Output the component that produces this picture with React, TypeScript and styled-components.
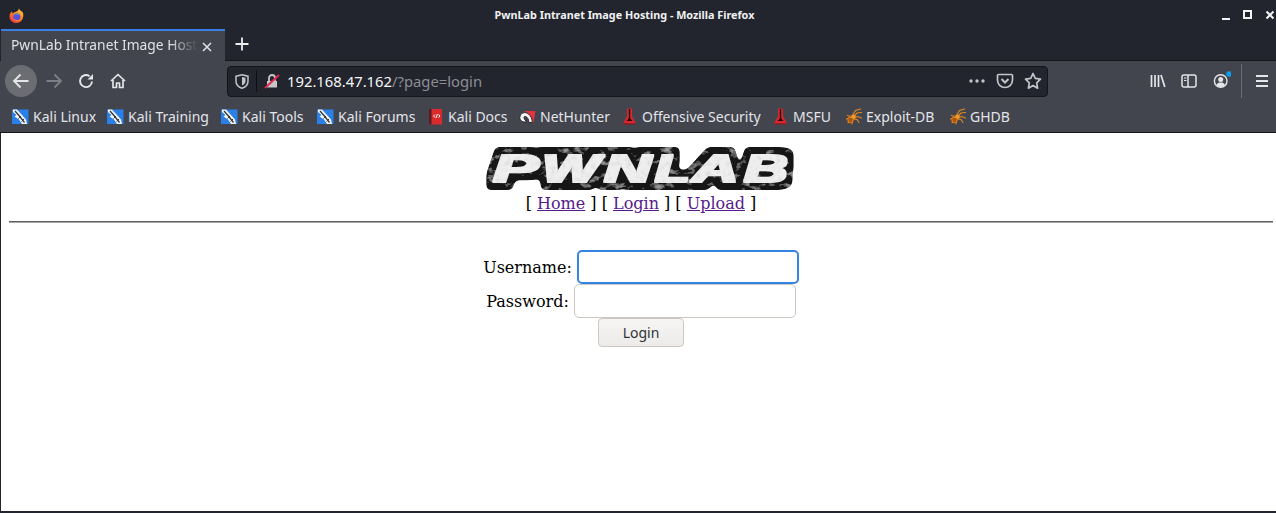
import styled, { createGlobalStyle } from "styled-components";

const GlobalStyle = createGlobalStyle`
  html, body {
    margin: 0;
    padding: 0;
    background: #fff;
  }
`;

const uiFont = `"Noto Sans", "Open Sans", sans-serif`;

const Window = styled.div`
  width: 1276px;
  height: 513px;
  overflow: hidden;
  display: flex;
  flex-direction: column;
  background: #23252e;
  font-family: ${uiFont};
`;

const TitleBar = styled.header`
  height: 28px;
  margin-top: 1px;
  display: flex;
  align-items: center;
  flex: none;
`;

const AppIcon = styled.div`
  width: 16px;
  height: 16px;
  margin-left: 9px;
  margin-top: -1px;
`;

const WindowTitle = styled.div`
  flex: 1;
  text-align: center;
  color: #f0f1f2;
  font-size: 10.8px;
  font-weight: 700;
  margin-top: -1px;
  padding-left: 3px;
`;

const WindowControls = styled.div`
  display: flex;
  align-items: center;
  gap: 12px;
  margin-right: 1px;
  margin-top: -1px;
`;

const TabStrip = styled.div`
  height: 32px;
  display: flex;
  flex: none;
  border-bottom: 1px solid #14151a;
  box-sizing: border-box;
  padding-left: 1px;
`;

const Tab = styled.div`
  width: 224px;
  height: 32px;
  box-sizing: border-box;
  border-top: 2px solid #3b7fe6;
  background: #42454e;
  display: flex;
  align-items: center;
  padding-left: 10px;
  color: #dfe1e5;
  font-size: 13.8px;
`;

const TabLabel = styled.span`
  width: 187px;
  overflow: hidden;
  white-space: nowrap;
  margin-top: -3px;
  -webkit-mask-image: linear-gradient(90deg, #000 85%, transparent 100%);
  mask-image: linear-gradient(90deg, #000 85%, transparent 100%);
`;

const TabClose = styled.div`
  width: 12px;
  height: 12px;
  margin-left: 3px;
  margin-top: -5px;
`;

const NewTab = styled.div`
  width: 16px;
  height: 16px;
  margin-left: 9px;
  margin-top: 6px;
`;

const NavBar = styled.nav`
  height: 40px;
  flex: none;
  background: #42454e;
  display: flex;
  align-items: center;
  padding-left: 5px;
`;

const NavButton = styled.div<{ $active?: boolean; $muted?: boolean; $width?: number }>`
  width: ${(p) => p.$width ?? 32}px;
  height: 32px;
  flex: none;
  display: flex;
  align-items: center;
  justify-content: center;
  border-radius: 50%;
  color: ${(p) => (p.$muted ? "#7d7f85" : "#e4e5e7")};
  background: ${(p) => (p.$active ? "#6b6d73" : "transparent")};
  margin-right: ${(p) => (p.$active ? "1px" : "0")};
`;

const UrlBar = styled.div`
  width: 821px;
  height: 31px;
  box-sizing: border-box;
  margin-left: 93px;
  margin-right: 94px;
  background: #23252e;
  border: 1px solid #14151a;
  border-radius: 4px;
  display: flex;
  align-items: center;
  flex: none;
`;

const ShieldSlot = styled.div`
  width: 28px;
  height: 100%;
  display: flex;
  align-items: center;
  justify-content: center;
  color: #c3c4c7;
`;

const UrlDivider = styled.div`
  width: 1px;
  height: 22px;
  background: #0f1014;
`;

const LockSlot = styled.div`
  width: 30px;
  display: flex;
  align-items: center;
  justify-content: center;
`;

const UrlText = styled.div`
  flex: 1;
  font-size: 14.8px;
  color: #8b8d93;
  white-space: nowrap;
  margin-top: -1px;
`;

const UrlHost = styled.span`
  color: #f5f6f7;
`;

const UrlActions = styled.div`
  display: flex;
  align-items: center;
  gap: 10px;
  color: #c3c4c7;
  padding-right: 5px;
`;

const ToolSeparator = styled.div`
  width: 1px;
  height: 34px;
  background: #6a6c72;
  margin-left: 5px;
  margin-right: 5px;
  flex: none;
`;

const BookmarkBar = styled.div`
  height: 32px;
  flex: none;
  box-sizing: border-box;
  background: #42454e;
  border-bottom: 1px solid #14151a;
  display: flex;
  align-items: center;
  padding-left: 12px;
`;

const Bookmark = styled.div<{ $width: number }>`
  width: ${(p) => p.$width}px;
  flex: none;
  display: flex;
  align-items: center;
  gap: 4px;
  color: #e2e4e8;
  font-size: 14px;
  white-space: nowrap;
`;

const Favicon = styled.svg`
  width: 17px;
  height: 17px;
  flex: none;
`;

const Page = styled.main`
  flex: 1;
  background: #fff;
  border-left: 1px solid #23252e;
  border-bottom: 2px solid #23252e;
  padding: 14px 3px 0 8px;
  font-family: "DejaVu Serif", serif;
  font-size: 16px;
  color: #000;
  text-align: center;
  min-height: 0;
`;

const Logo = styled.svg`
  display: block;
  width: 310px;
  height: 46px;
  margin: 0 auto;
`;

const PageNav = styled.div`
  line-height: 19px;
  margin-top: 1px;
`;

const PageLink = styled.a`
  color: #551a8b;
  text-decoration: underline;
`;

const Rule = styled.hr`
  margin: 8px 0 27px;
  height: 2px;
  box-sizing: border-box;
  border: 0;
  border-top: 1px solid #5e5e5e;
  border-bottom: 1px solid #a8a8a8;
`;

const LoginForm = styled.form`
  display: flex;
  flex-direction: column;
  align-items: center;
`;

const FieldRow = styled.label`
  height: 34px;
  display: flex;
  align-items: center;
  gap: 5px;
`;

const FieldInput = styled.input<{ $focused?: boolean }>`
  width: 222px;
  height: 34px;
  box-sizing: border-box;
  padding: 0 8px;
  outline: 0;
  background: #fff;
  border: ${(p) => (p.$focused ? "2px solid #3584e4" : "1px solid #cdc7c2")};
  border-radius: 5px;
`;

const SubmitButton = styled.button`
  width: 86px;
  height: 29px;
  box-sizing: border-box;
  border: 1px solid #cdc7c2;
  border-radius: 4px;
  background: linear-gradient(#f6f5f4, #edebe9);
  color: #2e3436;
  font-family: ${uiFont};
  font-size: 14px;
  padding: 0;
`;

const FirefoxIcon = () => (
  <svg width="16" height="16" viewBox="0 0 16 16">
    <defs>
      <linearGradient id="fx" x1="0.8" y1="0" x2="0.2" y2="1">
        <stop offset="0" stopColor="#ffd03a" />
        <stop offset="0.5" stopColor="#ff7a1f" />
        <stop offset="1" stopColor="#e8304a" />
      </linearGradient>
    </defs>
    <path d="M10 .5c.6 1.400 1.500 2 2.500 3 .6-.3 1 .2 1.500 1.500 1 3.500-.5 9.500-6 10C3.500 15.500.5 12 .5 8.500.5 6 1.500 4.500 3 3.500c0 1 .3 1.500.8 2C5 3.500 7.500 4 8.500 3c.8-.7 1.300-1.500 1.500-2.500z" fill="url(#fx)" />
    <circle cx="7.800" cy="9" r="3.600" fill="#5a50d8" />
    <path d="M5 6.500c1.500-1.500 4-1.500 5.500 0l-2 .8c-1-.3-2-.3-3.500-.8z" fill="#3f8df0" />
    <path d="M4 10c1 2.500 4 3.500 6.500 2.500 1-.5 2-1.500 2.500-3-1 2-3.500 3-5.500 2.500-1.500-.3-2.500-1-3.500-2z" fill="#ff9a2a" />
  </svg>
);

const KaliFavicon = () => (
  <Favicon viewBox="0 0 17 17">
    <path d="M0 1.500h16.500v14.500H0z" fill="#2a7fe8" />
    <path d="M1 1.500 5 1.500 14 11.500 15 16 10 16 7 11.500 2.500 8.500 4.500 7 1 4z" fill="#f4f5f7" />
    <path d="M3 3 7 7.500l5.500 7" fill="none" stroke="#33363d" strokeWidth="1.300" />
    <path d="M6.500 10.500l2.500-2.500M9.500 13.500l2.500-2.500" stroke="#33363d" strokeWidth="1" />
  </Favicon>
);

const DocsFavicon = () => (
  <Favicon viewBox="0 0 17 17">
    <path d="M2 1h13v15.500H3.500A1.500 1.500 0 0 1 2 15z" fill="#d92b2b" />
    <path d="M2 1h2.500v15.500h-1A1.500 1.500 0 0 1 2 15z" fill="#5b1b22" />
    <path d="M6.500 8 8 6.500M6.500 8 8 9.500M13 8 11.500 6.500M13 8 11.500 9.500M10.500 6 9 10" stroke="#fff" strokeWidth="1" fill="none" />
  </Favicon>
);

const NetHunterFavicon = () => (
  <Favicon viewBox="0 0 17 17">
    <path d="M5 3h11.500l-2 11.500H12L8 4.500z" fill="#e5333f" />
    <path d="M.8 9.500C1 5 6 3 9.500 6c2.500 2 3.800 5 3.800 8.500H9.800C9.800 11.500 8.500 9 6.500 8.500 5 8.200 4.500 9.500 5.500 11l2 3c-3.500.5-6.700-1-6.700-4.500z" fill="#f4f4f4" stroke="#26262a" strokeWidth="1" />
  </Favicon>
);

const FlaskFavicon = () => (
  <Favicon viewBox="0 0 17 17">
    <path d="M6 .5h5v7.500l4 7.500H2l4-7.500z" fill="#d9252b" />
    <path d="M7.800 1h1.400v9.500L11.500 13h-6l2.300-2.500z" fill="#1e0b0d" />
    <path d="M2.500 15.500h12v1h-12z" fill="#8e1418" />
  </Favicon>
);

const SpiderFavicon = () => (
  <Favicon viewBox="0 0 17 17">
    <g fill="none" stroke="#e58a1f" strokeWidth="1.100" strokeLinecap="round">
      <path d="M7 8 10.500 2.500l5-1.500M8 9l4-4 4.500-.5M8.500 10l4-1.500 4 1.500M9 11l3 .5 2 3M6.500 11 3 15M8 11.500l-1 4.500M5.500 9.500l-4 1.500M6 8.500 2.500 7.500" />
    </g>
    <ellipse cx="5.500" cy="11.800" rx="3.200" ry="3.400" fill="#d9751a" />
    <circle cx="8.500" cy="8.800" r="2.300" fill="#f09a2a" />
    <path d="M3.500 11h4M4 13h3" stroke="#6a3408" strokeWidth=".9" />
  </Favicon>
);

const bookmarks = [
  { label: "Kali Linux", icon: <KaliFavicon />, width: 95 },
  { label: "Kali Training", icon: <KaliFavicon />, width: 114 },
  { label: "Kali Tools", icon: <KaliFavicon />, width: 96 },
  { label: "Kali Forums", icon: <KaliFavicon />, width: 110 },
  { label: "Kali Docs", icon: <DocsFavicon />, width: 92 },
  { label: "NetHunter", icon: <NetHunterFavicon />, width: 102 },
  { label: "Offensive Security", icon: <FlaskFavicon />, width: 151 },
  { label: "MSFU", icon: <FlaskFavicon />, width: 73 },
  { label: "Exploit-DB", icon: <SpiderFavicon />, width: 104 },
  { label: "GHDB", icon: <SpiderFavicon />, width: 70 },
];

// x offset and horizontal stretch of each logo letter
const logoLetters = [
  { char: "P", x: 7, sx: 1.8 },
  { char: "W", x: 56, sx: 1.6 },
  { char: "N", x: 118, sx: 1.72 },
  { char: "L", x: 169, sx: 1.5 },
  { char: "A", x: 206, sx: 1.7 },
  { char: "B", x: 258, sx: 1.6 },
];

const LogoLayer = ({ fill, filter }: { fill: string; filter: string }) => (
  <g
    fontFamily="'Liberation Sans', sans-serif"
    fontWeight="700"
    fontStyle="italic"
    fontSize="38"
    fill={fill}
    filter={filter}
  >
    {logoLetters.map((l) => (
      <text key={l.char} transform={`translate(${l.x} 35) scale(${l.sx} 1)`}>
        {l.char}
      </text>
    ))}
  </g>
);

const PwnlabLogo = () => (
  <Logo viewBox="0 0 310 46">
    <defs>
      <filter id="rock" filterUnits="userSpaceOnUse" x="0" y="0" width="310" height="46">
        <feMorphology in="SourceAlpha" operator="dilate" radius="8 8" />
        <feGaussianBlur stdDeviation="2.500" />
        <feComponentTransfer result="blob">
          <feFuncA type="linear" slope="8" intercept="-3.500" />
        </feComponentTransfer>
        <feFlood floodColor="#141414" />
        <feComposite in2="blob" operator="in" result="dark" />
        <feTurbulence type="fractalNoise" baseFrequency="0.09 0.14" numOctaves="4" seed="7" />
        <feColorMatrix
          type="matrix"
          values="0 0 0 0 .5  0 0 0 0 .5  0 0 0 0 .5  2.400 0 0 0 -1.380"
        />
        <feComposite in2="blob" operator="in" result="veins" />
        <feMerge>
          <feMergeNode in="dark" />
          <feMergeNode in="veins" />
        </feMerge>
      </filter>
      <filter id="paper" filterUnits="userSpaceOnUse" x="0" y="0" width="310" height="46">
        <feMorphology in="SourceGraphic" operator="dilate" radius="1.500 1" result="letters" />
        <feTurbulence type="fractalNoise" baseFrequency="0.2" numOctaves="3" seed="3" />
        <feColorMatrix
          type="matrix"
          values="0 0 0 0 .6  0 0 0 0 .6  0 0 0 0 .6  1.400 0 0 0 -0.680"
        />
        <feComposite in2="letters" operator="in" result="grain" />
        <feMerge>
          <feMergeNode in="letters" />
          <feMergeNode in="grain" />
        </feMerge>
      </filter>
    </defs>
    <LogoLayer fill="#141414" filter="url(#rock)" />
    <LogoLayer fill="#eeeeee" filter="url(#paper)" />
  </Logo>
);

export default function App() {
  return (
    <>
      <GlobalStyle />
      <Window>
        <TitleBar>
          <AppIcon>
            <FirefoxIcon />
          </AppIcon>
          <WindowTitle>PwnLab Intranet Image Hosting - Mozilla Firefox</WindowTitle>
          <WindowControls>
            <svg width="10" height="10" viewBox="0 0 10 10">
              <path d="M1 8h8v2H1z" fill="#f4f4f4" />
            </svg>
            <svg width="10" height="10" viewBox="0 0 10 10">
              <path d="M1 1h7v7H1z" fill="none" stroke="#f4f4f4" strokeWidth="2" />
            </svg>
            <svg width="10" height="10" viewBox="0 0 10 10">
              <path d="M1.500 1.500l7 7M8.500 1.500l-7 7" stroke="#f4f4f4" strokeWidth="2" />
            </svg>
          </WindowControls>
        </TitleBar>

        <TabStrip>
          <Tab>
            <TabLabel>PwnLab Intranet Image Hosting</TabLabel>
            <TabClose>
              <svg width="12" height="12" viewBox="0 0 12 12">
                <path d="M2 2l8 8M10 2l-8 8" stroke="#dfe1e5" strokeWidth="1.600" />
              </svg>
            </TabClose>
          </Tab>
          <NewTab>
            <svg width="16" height="16" viewBox="0 0 16 16">
              <path d="M8 1.500v13M1.500 8h13" stroke="#eceded" strokeWidth="1.800" />
            </svg>
          </NewTab>
        </TabStrip>

        <NavBar>
          <NavButton $active>
            <svg width="18" height="18" viewBox="0 0 18 18" fill="none" stroke="currentColor" strokeWidth="1.800">
              <path d="M16.500 9H2M8.500 2.500 2 9l6.500 6.500" />
            </svg>
          </NavButton>
          <NavButton $muted>
            <svg width="18" height="18" viewBox="0 0 18 18" fill="none" stroke="currentColor" strokeWidth="1.800">
              <path d="M1.500 9H16M9.500 2.500 16 9l-6.500 6.500" />
            </svg>
          </NavButton>
          <NavButton>
            <svg width="16" height="16" viewBox="0 0 16 16" fill="none" stroke="currentColor" strokeWidth="1.900">
              <path d="M14 8.500A6 6 0 1 1 11.500 3.200" />
              <path d="M15 1v5.500H9.500z" fill="currentColor" stroke="none" />
            </svg>
          </NavButton>
          <NavButton>
            <svg width="16" height="16" viewBox="0 0 16 16" fill="none" stroke="currentColor" strokeWidth="1.700">
              <path d="M1 8 8 1.500 15 8M3 7v7.500h3.500V10h3v4.500H13V7" strokeLinejoin="round" />
            </svg>
          </NavButton>

          <UrlBar>
            <ShieldSlot>
              <svg width="14" height="15" viewBox="0 0 14 15">
                <path d="M1 2.200 7 .8l6 1.400v5c0 3.500-2.500 5.800-6 7-3.500-1.200-6-3.500-6-7z" fill="none" stroke="currentColor" strokeWidth="1.500" />
                <path d="M7 3l3.500.8v3.400c0 2-1.500 3.500-3.500 4.300z" fill="currentColor" />
              </svg>
            </ShieldSlot>
            <UrlDivider />
            <LockSlot>
              <svg width="16" height="16" viewBox="0 0 16 16">
                <path d="M3 8h10v6.500H3z" fill="#c6c7ca" />
                <path d="M5 8V5a3 3 0 0 1 6 0v3" fill="none" stroke="#c6c7ca" strokeWidth="1.800" />
                <path d="M1 15 15 2" stroke="#e22850" strokeWidth="2" />
              </svg>
            </LockSlot>
            <UrlText>
              <UrlHost>192.168.47.162</UrlHost>/?page=login
            </UrlText>
            <UrlActions>
              <svg width="18" height="16" viewBox="0 0 18 16" fill="currentColor">
                <circle cx="3" cy="8" r="1.700" />
                <circle cx="9" cy="8" r="1.700" />
                <circle cx="15" cy="8" r="1.700" />
              </svg>
              <svg width="18" height="18" viewBox="0 0 18 18" fill="none" stroke="currentColor" strokeWidth="1.700">
                <path d="M2.500 2.500h13a1 1 0 0 1 1 1V8a7.500 7.500 0 0 1-15 0V3.500a1 1 0 0 1 1-1z" />
                <path d="M5.500 7 9 10.500 12.500 7" strokeWidth="2" />
              </svg>
              <svg width="18" height="18" viewBox="0 0 18 18" fill="none" stroke="currentColor" strokeWidth="1.700" strokeLinejoin="round">
                <path d="M9 1.500l2.300 4.900 5.200.7-3.800 3.700.9 5.400L9 13.600l-4.600 2.600.9-5.400L1.500 7.100l5.200-.7z" />
              </svg>
            </UrlActions>
          </UrlBar>

          <NavButton>
            <svg width="16" height="16" viewBox="0 0 16 16" fill="none" stroke="currentColor" strokeWidth="1.700">
              <path d="M1.500 2v12M5 2v12M8.500 2v12M11 2l3.800 12" />
            </svg>
          </NavButton>
          <NavButton $width={30}>
            <svg width="16" height="16" viewBox="0 0 16 16" fill="none" stroke="currentColor" strokeWidth="1.500">
              <rect x="1" y="2" width="14" height="12" rx="2" />
              <path d="M7 2v12" />
              <path d="M3 5h2.500M3 7.500h2.500" strokeWidth="1.100" />
            </svg>
          </NavButton>
          <NavButton>
            <svg width="22" height="22" viewBox="0 0 22 22" fill="none">
              <circle cx="11.700" cy="11" r="6.300" stroke="currentColor" strokeWidth="1.400" />
              <circle cx="11.700" cy="9.500" r="2.500" fill="currentColor" />
              <path d="M7.500 15C8.200 13 9.700 12.500 11.700 12.500s3.500.5 4.200 2.500c-1.200 1.500-2.700 2-4.200 2s-3-.5-4.200-2z" fill="currentColor" />
              <circle cx="20" cy="4" r="2.800" fill="#0a9fe8" />
            </svg>
          </NavButton>
          <ToolSeparator />
          <NavButton $width={30}>
            <svg width="14" height="14" viewBox="0 0 14 14" stroke="currentColor" strokeWidth="1.800">
              <path d="M1 2h12M1 7h12M1 12h12" />
            </svg>
          </NavButton>
        </NavBar>

        <BookmarkBar>
          {bookmarks.map((b) => (
            <Bookmark key={b.label} $width={b.width}>
              {b.icon}
              <span>{b.label}</span>
            </Bookmark>
          ))}
        </BookmarkBar>

        <Page>
          <PwnlabLogo />
          <PageNav>
            [ <PageLink href="#">Home</PageLink> ] [ <PageLink href="#">Login</PageLink> ] [{" "}
            <PageLink href="#">Upload</PageLink> ]
          </PageNav>
          <Rule />
          <LoginForm>
            <FieldRow>
              Username:
              <FieldInput $focused type="text" />
            </FieldRow>
            <FieldRow>
              Password:
              <FieldInput type="password" />
            </FieldRow>
            <SubmitButton type="button">Login</SubmitButton>
          </LoginForm>
        </Page>
      </Window>
    </>
  );
}
